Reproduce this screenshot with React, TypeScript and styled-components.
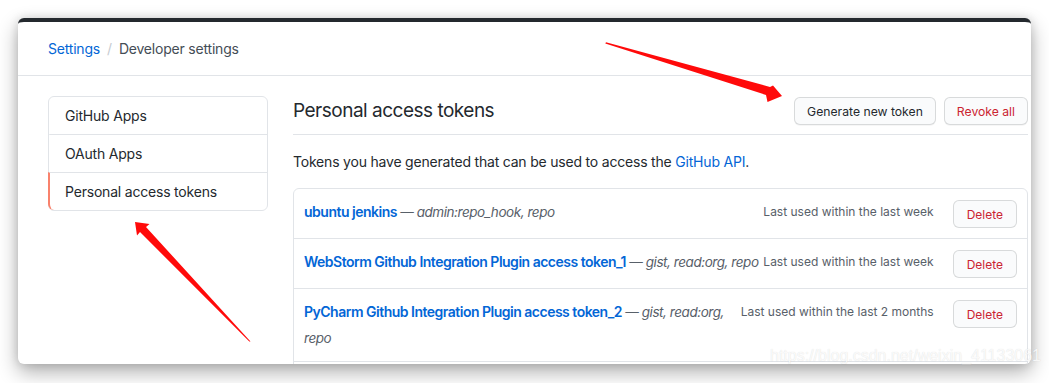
import styled, { createGlobalStyle } from "styled-components";

const GlobalStyle = createGlobalStyle`
  body {
    margin: 0;
    background: #ffffff;
    font-family: Inter, "Liberation Sans", "Noto Sans", sans-serif;
    color: #24292e;
  }
`;

const menuItems = [
  { label: "GitHub Apps", active: false },
  { label: "OAuth Apps", active: false },
  { label: "Personal access tokens", active: true },
];

const tokens = [
  {
    name: "ubuntu jenkins",
    scopes: "admin:repo_hook, repo",
    lastUsed: "Last used within the last week",
  },
  {
    name: "WebStorm Github Integration Plugin access token_1",
    scopes: "gist, read:org, repo",
    lastUsed: "Last used within the last week",
  },
  {
    name: "PyCharm Github Integration Plugin access token_2",
    scopes: "gist, read:org, repo",
    lastUsed: "Last used within the last 2 months",
  },
  {
    name: "GoLand Github Integration Plugin access token",
    scopes: "gist, read:org, repo",
    lastUsed: "Last used within the last 3 months",
  },
];

const App = () => {
  return (
    <>
      <GlobalStyle />
      <Page>
        <Window>
          {/* ------ breadcrumb ------ */}
          <Header>
            <Crumb href="#">Settings</Crumb>
            <Slash>/</Slash>
            <Current>Developer settings</Current>
          </Header>

          <Layout>
            {/* ------ side menu ------ */}
            <Menu>
              {menuItems.map((item) => (
                <MenuItem key={item.label} $active={item.active}>
                  {item.label}
                </MenuItem>
              ))}
            </Menu>

            {/* ------ tokens panel ------ */}
            <Main>
              <Subhead>
                <Heading>Personal access tokens</Heading>
                <Actions>
                  <Button>Generate new token</Button>
                  <Button $danger>Revoke all</Button>
                </Actions>
              </Subhead>
              <Intro>
                Tokens you have generated that can be used to access the{" "}
                <Link href="#">GitHub API</Link>.
              </Intro>
              <TokenList>
                {tokens.map((token) => (
                  <TokenRow key={token.name}>
                    <TokenText>
                      <TokenName href="#">{token.name}</TokenName>
                      <Scopes> — {token.scopes}</Scopes>
                    </TokenText>
                    <LastUsed>{token.lastUsed}</LastUsed>
                    <DeleteButton>Delete</DeleteButton>
                  </TokenRow>
                ))}
              </TokenList>
            </Main>
          </Layout>
        </Window>

        {/* ------ annotation arrows ------ */}
        <Annotations width="1049" height="383" viewBox="0 0 1049 383">
          <polygon points="606,42.3 770,87 773,85.5 782,96 767.5,102 766,95 605.3,43.6" />
          <polygon points="250.5,341.5 146,227 149.5,224 135,222 137,235.5 140,232 249.3,341.6" />
        </Annotations>
        <Watermark>https://blog.csdn.net/weixin_41133061</Watermark>
      </Page>
    </>
  );
};

export default App;

// ------ component styles ------
const Page = styled.div`
  position: relative;
  width: 1049px;
  height: 383px;
  overflow: hidden;
  padding: 18px 18px 0 18px;
  box-sizing: border-box;
`;

const Window = styled.div`
  width: 1013px;
  height: 346px;
  box-sizing: border-box;
  border-top: 4px solid #24292e;
  border-radius: 6px;
  background: #ffffff;
  overflow: hidden;
  box-shadow: 0 8px 20px rgba(0, 0, 0, 0.32), 0 0 10px rgba(0, 0, 0, 0.12);
`;

const Header = styled.div`
  height: 54px;
  box-sizing: border-box;
  display: flex;
  align-items: center;
  padding-left: 30px;
  border-bottom: 1px solid #e1e4e8;
  font-size: 14px;
  letter-spacing: -0.2px;
`;

const Crumb = styled.a`
  color: #0366d6;
  text-decoration: none;
`;

const Slash = styled.span`
  color: #c6cbd1;
  margin: 0 7px;
`;

const Current = styled.span`
  color: #444d56;
`;

const Layout = styled.div`
  display: flex;
  align-items: flex-start;
  gap: 25px;
  padding: 20px 3px 0 30px;
`;

const Menu = styled.nav`
  width: 220px;
  flex-shrink: 0;
  border: 1px solid #e1e4e8;
  border-radius: 6px;
  box-sizing: border-box;
`;

const MenuItem = styled.div<{ $active?: boolean }>`
  padding: 8px 16px 8px 15px;
  margin-left: -1px;
  line-height: 21px;
  font-size: 14px;
  letter-spacing: -0.2px;
  color: #24292e;
  border-left: 2px solid ${(p) => (p.$active ? "#f9826c" : "transparent")};

  &:not(:first-child) {
    border-top: 1px solid #e1e4e8;
  }

  &:last-child {
    border-bottom-left-radius: 6px;
  }
`;

const Main = styled.div`
  flex: 1;
  min-width: 0;
`;

const Subhead = styled.div`
  display: flex;
  align-items: center;
  justify-content: space-between;
  padding-bottom: 8px;
  border-bottom: 1px solid #e1e4e8;
`;

const Heading = styled.h2`
  margin: 0;
  font-size: 19px;
  font-weight: 400;
  letter-spacing: -0.5px;
  line-height: 30px;
  color: #24292e;
`;

const Actions = styled.div`
  display: flex;
  gap: 8px;
`;

const Button = styled.button<{ $danger?: boolean }>`
  height: 28px;
  padding: 0 12px;
  font-family: inherit;
  font-size: 12.2px;
  color: ${(p) => (p.$danger ? "#cb2431" : "#24292e")};
  background: #fafbfc;
  border: 1px solid rgba(27, 31, 35, 0.15);
  border-radius: 6px;
  box-shadow: 0 1px 0 rgba(27, 31, 35, 0.04);
`;

const Intro = styled.p`
  margin: 16px 0;
  font-size: 14px;
  letter-spacing: -0.2px;
  line-height: 21px;
  color: #24292e;
`;

const Link = styled.a`
  color: #0366d6;
  text-decoration: none;
`;

const TokenList = styled.div`
  border: 1px solid #e1e4e8;
  border-radius: 6px;
`;

const TokenRow = styled.div`
  display: flex;
  align-items: flex-start;
  padding: 10px;

  &:not(:first-child) {
    border-top: 1px solid #e1e4e8;
  }
`;

const TokenText = styled.div`
  flex: 1;
  min-width: 0;
  font-size: 14px;
  line-height: 26px;
`;

const TokenName = styled.a`
  color: #0366d6;
  font-weight: 600;
  letter-spacing: -0.5px;
  text-decoration: none;
`;

const Scopes = styled.em`
  color: #586069;
  font-size: 13.5px;
  letter-spacing: -0.45px;
`;

const LastUsed = styled.span`
  font-size: 12px;
  line-height: 26px;
  color: #586069;
  white-space: nowrap;
`;

const DeleteButton = styled.button`
  height: 28px;
  margin: 1px 0 0 19px;
  padding: 0 13px;
  font-family: inherit;
  font-size: 12px;
  color: #cb2431;
  background: #fafbfc;
  border: 1px solid rgba(27, 31, 35, 0.15);
  border-radius: 6px;
`;

const Annotations = styled.svg`
  position: absolute;
  top: 0;
  left: 0;
  pointer-events: none;
  fill: #ff0a0a;
`;

const Watermark = styled.span`
  position: absolute;
  left: 770px;
  top: 347px;
  font-family: "Liberation Sans", sans-serif;
  font-size: 16px;
  color: rgba(255, 255, 255, 0.85);
  text-shadow: 0 0 1px rgba(0, 0, 0, 0.15);
  pointer-events: none;
`;
